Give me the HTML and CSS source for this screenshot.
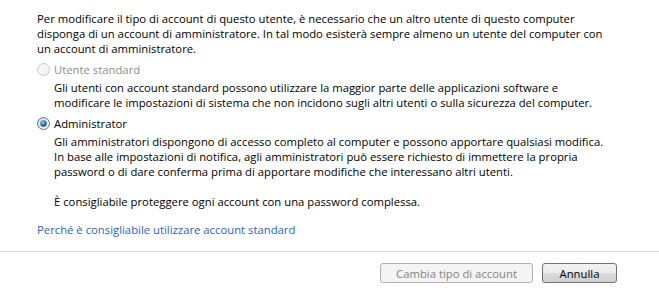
FILE: index.html
```html
<!DOCTYPE html>
<html>

<head>
    <title>Cambia tipo di account</title>
    <meta charset="UTF-8">
    <link rel="stylesheet" href="styles.css">
</head>

<body>
    <div class="content">
        <p class="intro">Per modificare il tipo di account di questo utente, è necessario che un altro utente di questo computer<br>
            disponga di un account di amministratore. In tal modo esisterà sempre almeno un utente del computer con<br>
            un account di amministratore.</p>

        <div class="option disabled">
            <div class="option-head">
                <svg class="radio" width="13" height="13" viewBox="0 0 13 13">
                    <circle cx="6.5" cy="6.5" r="6" fill="#f4f4f4" stroke="#c8c8c8" />
                </svg>
                <span>Utente standard</span>
            </div>
            <div class="option-desc">
                <p>Gli utenti con account standard possono utilizzare la maggior parte delle applicazioni software e<br>
                    modificare le impostazioni di sistema che non incidono sugli altri utenti o sulla sicurezza del computer.</p>
            </div>
        </div>

        <div class="option">
            <div class="option-head">
                <svg class="radio" width="13" height="13" viewBox="0 0 13 13">
                    <defs>
                        <radialGradient id="dot" cx="0.4" cy="0.35" r="0.7">
                            <stop offset="0" stop-color="#8fd0f5" />
                            <stop offset="0.6" stop-color="#1f78b8" />
                            <stop offset="1" stop-color="#0c3f6e" />
                        </radialGradient>
                        <linearGradient id="ring" x1="0" y1="0" x2="1" y2="1">
                            <stop offset="0" stop-color="#d8d8d8" />
                            <stop offset="1" stop-color="#f8f8f8" />
                        </linearGradient>
                    </defs>
                    <circle cx="6.5" cy="6.5" r="6" fill="url(#ring)" stroke="#6e6e6e" />
                    <circle cx="6.5" cy="6.5" r="3.2" fill="url(#dot)" />
                </svg>
                <span>Administrator</span>
            </div>
            <div class="option-desc">
                <p>Gli amministratori dispongono di accesso completo al computer e possono apportare qualsiasi modifica.<br>
                    In base alle impostazioni di notifica, agli amministratori può essere richiesto di immettere la propria<br>
                    password o di dare conferma prima di apportare modifiche che interessano altri utenti.</p>
                <p class="note">È consigliabile proteggere ogni account con una password complessa.</p>
            </div>
        </div>

        <a class="help-link" href="#">Perché è consigliabile utilizzare account standard</a>
    </div>

    <div class="footer">
        <button class="btn" disabled>Cambia tipo di account</button>
        <button class="btn">Annulla</button>
    </div>
</body>

</html>
```

FILE: styles.css
```css
body {
    font-family: "Open Sans", "Noto Sans", sans-serif;
    font-size: 11.3px;
    line-height: 15px;
    color: #000;
    background: #fff;
    margin: 0;
}
p {
    margin: 0;
}
.content {
    padding: 11px 20px 0 37px;
}
.intro {
    white-space: nowrap;
}
.option {
    margin-top: 6px;
}
.option-head {
    display: flex;
    align-items: center;
    gap: 4px;
    height: 15px;
}
.radio {
    flex: none;
}
.disabled .option-head span {
    color: #8d8d8d;
}
.option-desc {
    padding: 3px 0 0 17px;
    white-space: nowrap;
}
.option-desc .note {
    margin-top: 15px;
}
.help-link {
    display: block;
    margin-top: 13px;
    color: #1f66c4;
    text-decoration: none;
}
.footer {
    margin-top: 14px;
    border-top: 1px solid #d6d6d6;
    display: flex;
    justify-content: flex-end;
    gap: 9px;
    padding: 11px 42px 0 0;
}
.btn {
    font-family: inherit;
    font-size: 11.3px;
    height: 20px;
    padding: 0;
    border: 1px solid #707070;
    border-radius: 3px;
    background: linear-gradient(#f2f2f2 0%, #ebebeb 50%, #dddddd 50%, #cfcfcf 100%);
    color: #000;
    width: 75px;
}
.btn:disabled {
    width: 153px;
    border-color: #adb2b5;
    background: #f4f4f4;
    color: #838383;
}
```
